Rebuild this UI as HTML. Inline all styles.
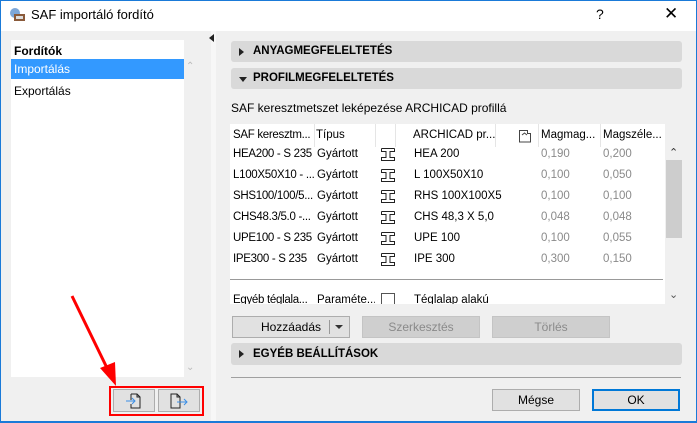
<!DOCTYPE html>
<html><head><meta charset="utf-8"><style>
*{box-sizing:border-box;margin:0;padding:0}
body{width:697px;height:423px;overflow:hidden;background:#f0f0f0;font-family:"Liberation Sans",sans-serif;font-size:12px;color:#000;position:relative}
.a{position:absolute}
.hdr{position:absolute;left:231px;width:451px;height:21px;background:#d9d9d9;border-radius:3px;font-weight:bold;font-size:11.5px;line-height:21px;padding-left:22px}
.tri{position:absolute;left:8px;top:7px;width:0;height:0}
.btn{position:absolute;height:22px;border:1px solid #adadad;background:#e1e1e1;text-align:center;line-height:20px;font-size:12px}
.dis{color:#8a8a8a;background:#cfcfcf;border-color:#c4c4c4}
.row{position:absolute;left:0;height:21px;line-height:21px;white-space:nowrap;font-size:11.5px}
.row span,.th span{overflow:hidden;white-space:nowrap}
.c1{left:3px;width:81px;letter-spacing:-0.3px}
.c2{left:87px;width:58px}
.g{color:#8a8a8a}
</style></head><body>
<div class="a" style="left:0;top:0;width:697px;height:31px;background:#fff;border-top:1px solid #1a7ad8"></div>
<div class="a" style="left:0;top:0;width:1px;height:423px;background:#1a7ad8"></div>
<div class="a" style="right:0;top:0;width:1px;height:423px;background:#1a7ad8"></div>
<div class="a" style="left:0;bottom:0;width:697px;height:2px;background:#1a7ad8"></div>
<svg class="a" style="left:9px;top:7px" width="18" height="17"><circle cx="6" cy="6" r="5" fill="#7da7d8"/><rect x="5" y="7" width="11" height="7" fill="#8a5a3a"/><rect x="7" y="9" width="7" height="3" fill="#ddd"/></svg>
<div class="a" style="left:31px;top:7px;font-size:13px">SAF importáló fordító</div>
<div class="a" style="left:596px;top:6px;font-size:14px">?</div>
<div class="a" style="left:664px;top:4px;font-size:17px">✕</div>

<div class="a" style="left:11px;top:40px;width:173px;height:337px;background:#fff"></div>
<div class="a" style="left:14px;top:44px;font-weight:bold">Fordítók</div>
<div class="a" style="left:11px;top:59px;width:173px;height:20px;background:#3399ff;color:#fff;line-height:20px;padding-left:3px">Importálás</div>
<div class="a" style="left:14px;top:84px">Exportálás</div>
<div class="a" style="left:186px;top:61px;color:#bbb;font-size:10px">&#8963;</div>
<div class="a" style="left:186px;top:362px;color:#bbb;font-size:10px">&#8964;</div>
<div class="a" style="left:211px;top:31px;width:5px;height:390px;background:#f7f7f7"></div>
<div class="a" style="left:209px;top:34px;width:0;height:0;border-top:4px solid transparent;border-bottom:4px solid transparent;border-right:5px solid #222"></div>

<div class="btn" style="left:113px;top:389px;width:42px;height:23px"></div>
<div class="btn" style="left:158px;top:389px;width:42px;height:23px"></div>
<svg class="a" style="left:125px;top:391px" width="20" height="20"><path d="M6 3h6l3 3v11H6v-4M6 9V3M12 3v3h3" fill="none" stroke="#222"/><path d="M1 10h9M7 7l3 3-3 3" fill="none" stroke="#3a8ee6"/></svg>
<svg class="a" style="left:168px;top:391px" width="22" height="20"><path d="M3 3h6l3 3v11H3zM9 3v3h3" fill="none" stroke="#222"/><path d="M9 11h10M16 8l3 3-3 3" fill="none" stroke="#3a8ee6"/></svg>
<div class="a" style="left:109px;top:386px;width:95px;height:30px;border:2px solid #f00"></div>
<svg class="a" style="left:60px;top:290px" width="60" height="100"><path d="M12 6L48 80" stroke="#f00" stroke-width="3"/><path d="M40 78L56 96L55 72Z" fill="#f00"/></svg>

<div class="hdr" style="top:41px"><div class="tri" style="border-top:4px solid transparent;border-bottom:4px solid transparent;border-left:5px solid #222"></div>ANYAGMEGFELELTETÉS</div>
<div class="hdr" style="top:68px"><div class="tri" style="top:9px;border-left:4px solid transparent;border-right:4px solid transparent;border-top:5px solid #222"></div>PROFILMEGFELELTETÉS</div>
<div class="a" style="left:231px;top:101px">SAF keresztmetszet leképezése ARCHICAD profillá</div>

<div class="a" style="left:230px;top:124px;width:435px;height:180px;background:#fff;overflow:hidden">
 <div class="a th" style="left:0;top:0;width:435px;height:23px;background:#fff;line-height:22px;font-size:11.5px">
  <span class="a c1">SAF keresztm...</span><span class="a" style="left:86px">Típus</span><span class="a" style="left:183px">ARCHICAD pr...</span><span class="a" style="left:311px">Magmag...</span><span class="a" style="left:373px">Magszéle...</span>
  <div class="a" style="left:84px;top:0;width:1px;height:23px;background:#e5e5e5"></div>
  <div class="a" style="left:145px;top:0;width:1px;height:23px;background:#e5e5e5"></div>
  <div class="a" style="left:165px;top:0;width:1px;height:23px;background:#e5e5e5"></div>
  <div class="a" style="left:265px;top:0;width:1px;height:23px;background:#e5e5e5"></div>
  <div class="a" style="left:308px;top:0;width:1px;height:23px;background:#e5e5e5"></div>
  <div class="a" style="left:370px;top:0;width:1px;height:23px;background:#e5e5e5"></div>
  <svg class="a" style="left:288px;top:5px" width="14" height="14"><path d="M1.5 13V1.5h8v3h3V13z" fill="none" stroke="#444"/><path d="M4 6l2.5-2 2.5 2" fill="none" stroke="#444"/></svg>
 </div>
 <div class="row" style="top:20px;width:435px"><span class="a c1">HEA200 - S 235</span><span class="a c2">Gyártott</span><span class="a" style="left:184px">HEA 200</span><span class="a g" style="left:311px">0,190</span><span class="a g" style="left:373px">0,200</span></div>
 <div class="row" style="top:41px;width:435px"><span class="a c1">L100X50X10 - ...</span><span class="a c2">Gyártott</span><span class="a" style="left:184px">L 100X50X10</span><span class="a g" style="left:311px">0,100</span><span class="a g" style="left:373px">0,050</span></div>
 <div class="row" style="top:62px;width:435px"><span class="a c1">SHS100/100/5...</span><span class="a c2">Gyártott</span><span class="a" style="left:184px">RHS 100X100X5</span><span class="a g" style="left:311px">0,100</span><span class="a g" style="left:373px">0,100</span></div>
 <div class="row" style="top:83px;width:435px"><span class="a c1">CHS48.3/5.0 -...</span><span class="a c2">Gyártott</span><span class="a" style="left:184px">CHS 48,3 X 5,0</span><span class="a g" style="left:311px">0,048</span><span class="a g" style="left:373px">0,048</span></div>
 <div class="row" style="top:104px;width:435px"><span class="a c1">UPE100 - S 235</span><span class="a c2">Gyártott</span><span class="a" style="left:184px">UPE 100</span><span class="a g" style="left:311px">0,100</span><span class="a g" style="left:373px">0,055</span></div>
 <div class="row" style="top:125px;width:435px"><span class="a c1">IPE300 - S 235</span><span class="a c2">Gyártott</span><span class="a" style="left:184px">IPE 300</span><span class="a g" style="left:311px">0,300</span><span class="a g" style="left:373px">0,150</span></div>
 <svg class="a" style="left:151px;top:24px" width="14" height="130" fill="none" stroke="#222" stroke-width="1">
  <path d="M0.5 0.5h13M0.5 0.5v3h4.5v6H0.5v3h13v-3H9v-6h4.5v-3"/>
  <path transform="translate(0 21)" d="M0.5 0.5h13M0.5 0.5v3h4.5v6H0.5v3h13v-3H9v-6h4.5v-3"/>
  <path transform="translate(0 42)" d="M0.5 0.5h13M0.5 0.5v3h4.5v6H0.5v3h13v-3H9v-6h4.5v-3"/>
  <path transform="translate(0 63)" d="M0.5 0.5h13M0.5 0.5v3h4.5v6H0.5v3h13v-3H9v-6h4.5v-3"/>
  <path transform="translate(0 84)" d="M0.5 0.5h13M0.5 0.5v3h4.5v6H0.5v3h13v-3H9v-6h4.5v-3"/>
  <path transform="translate(0 105)" d="M0.5 0.5h13M0.5 0.5v3h4.5v6H0.5v3h13v-3H9v-6h4.5v-3"/>
 </svg>
 <div class="a" style="left:0;top:155px;width:433px;height:1px;background:#999"></div>
 <div class="row" style="top:166px;width:435px"><span class="a c1">Egyéb téglala...</span><span class="a c2">Paraméte...</span><span class="a" style="left:184px">Téglalap alakú</span><div class="a" style="left:151px;top:3px;width:14px;height:14px;border:1px solid #555"></div></div>
</div>
<div class="a" style="left:665px;top:145px;width:18px;height:159px;background:#f0f0f0"></div>
<div class="a" style="left:669px;top:146px;font-size:11px;color:#333">&#8963;</div>
<div class="a" style="left:666px;top:160px;width:16px;height:78px;background:#cdcdcd"></div>
<div class="a" style="left:669px;top:288px;font-size:11px;color:#555">&#8964;</div>

<div class="btn" style="left:232px;top:316px;width:118px">Hozzáadás<span class="a" style="left:96px;top:3px;width:1px;height:14px;background:#999"></span><span class="a" style="left:102px;top:8px;border-left:4px solid transparent;border-right:4px solid transparent;border-top:4px solid #333"></span></div>
<div class="btn dis" style="left:362px;top:316px;width:118px">Szerkesztés</div>
<div class="btn dis" style="left:492px;top:316px;width:118px">Törlés</div>
<div class="hdr" style="top:343px;height:22px;line-height:22px"><div class="tri" style="border-top:4px solid transparent;border-bottom:4px solid transparent;border-left:5px solid #222"></div>EGYÉB BEÁLLÍTÁSOK</div>
<div class="a" style="left:231px;top:377px;width:450px;height:1px;background:#a0a0a0"></div>
<div class="btn" style="left:492px;top:389px;width:88px">Mégse</div>
<div class="btn" style="left:592px;top:389px;width:88px;border:2px solid #0078d7;line-height:18px">OK</div>
</body></html>
